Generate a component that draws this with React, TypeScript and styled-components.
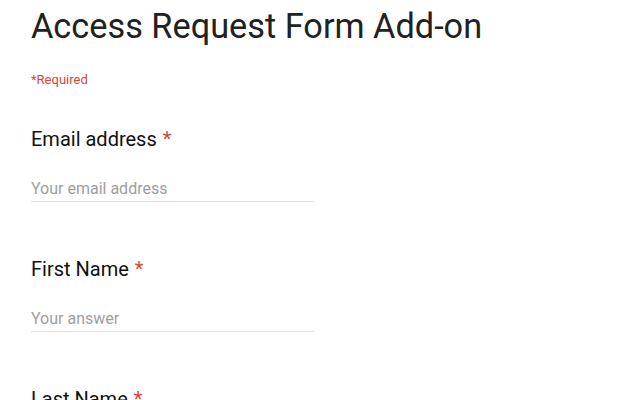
import React from "react";
import styled, { createGlobalStyle } from "styled-components";

const Global = createGlobalStyle`
  html, body { margin: 0; padding: 0; background: #fff; }
  body { font-family: Roboto, "Noto Sans", Arial, sans-serif; }
`;

const Page = styled.div`
  padding: 0 0 0 31px;
  width: 283px;
`;

const Title = styled.h1`
  margin: 0;
  padding-top: 4px;
  font-size: 34.3px;
  font-weight: 400;
  line-height: 44px;
  color: #212121;
  white-space: nowrap;
`;

const Required = styled.div`
  margin-top: 23px;
  font-size: 13px;
  line-height: 18px;
  color: #db4437;
`;

const Questions = styled.div`
  display: flex;
  flex-direction: column;
  gap: 53px;
  margin-top: 36px;
`;

const Question = styled.div`
  display: flex;
  flex-direction: column;
`;

const Label = styled.div`
  font-size: 20px;
  line-height: 28px;
  color: #111;
  white-space: nowrap;
`;

const Star = styled.span`
  color: #db4437;
  margin-left: 6px;
`;

const Input = styled.input`
  margin-top: 21px;
  width: 100%;
  box-sizing: border-box;
  border: none;
  border-bottom: 1px solid #e0e0e0;
  padding: 1px 0 0 0;
  font-family: inherit;
  font-size: 16px;
  line-height: 24px;
  height: 28px;
  outline: none;
  color: #212121;
  &::placeholder { color: #9e9e9e; }
`;

const questions = [
  { label: "Email address", placeholder: "Your email address" },
  { label: "First Name", placeholder: "Your answer" },
  { label: "Last Name", placeholder: "Your answer" },
];

export default function App() {
  return (
    <>
      <Global />
      <Page>
        <Title>Access Request Form Add-on</Title>
        <Required>*Required</Required>
        <Questions>
          {questions.map((q) => (
            <Question key={q.label}>
              <Label>
                {q.label}
                <Star>*</Star>
              </Label>
              <Input placeholder={q.placeholder} />
            </Question>
          ))}
        </Questions>
      </Page>
    </>
  );
}
